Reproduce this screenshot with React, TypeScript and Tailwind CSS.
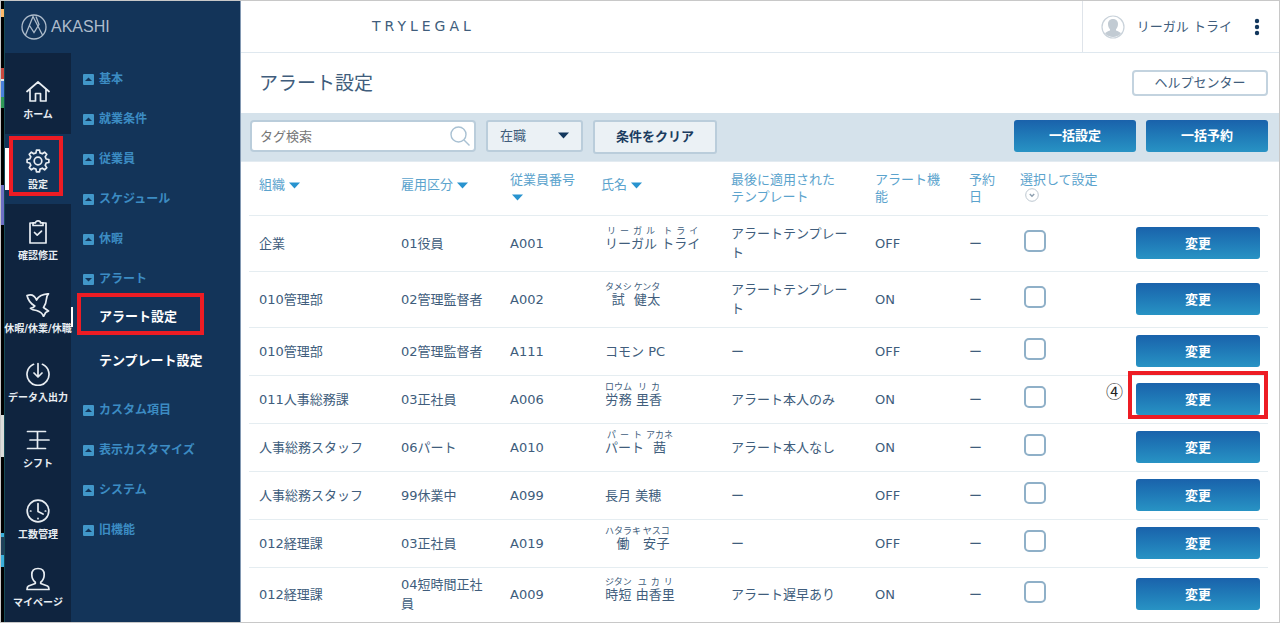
import type { ReactNode } from "react";
import { clsx } from "clsx";

type NamePart = { base: string; kana?: string };

type Employee = {
  org: string;
  kind: string;
  code: string;
  name: NamePart[];
  template: string;
  alert: "ON" | "OFF";
  marked?: boolean;
};

const EMPLOYEES: Employee[] = [
  {
    org: "企業",
    kind: "01役員",
    code: "A001",
    name: [
      { base: "リーガル", kana: "リーガル" },
      { base: "トライ", kana: "トライ" },
    ],
    template: "アラートテンプレート",
    alert: "OFF",
  },
  {
    org: "010管理部",
    kind: "02管理監督者",
    code: "A002",
    name: [
      { base: "試", kana: "タメシ" },
      { base: "健太", kana: "ケンタ" },
    ],
    template: "アラートテンプレート",
    alert: "ON",
  },
  { org: "010管理部", kind: "02管理監督者", code: "A111", name: [{ base: "コモン PC" }], template: "ー", alert: "OFF" },
  {
    org: "011人事総務課",
    kind: "03正社員",
    code: "A006",
    name: [
      { base: "労務", kana: "ロウム" },
      { base: "里香", kana: "リカ" },
    ],
    template: "アラート本人のみ",
    alert: "ON",
    marked: true,
  },
  {
    org: "人事総務スタッフ",
    kind: "06パート",
    code: "A010",
    name: [
      { base: "パート", kana: "パート" },
      { base: "茜", kana: "アカネ" },
    ],
    template: "アラート本人なし",
    alert: "ON",
  },
  { org: "人事総務スタッフ", kind: "99休業中", code: "A099", name: [{ base: "長月 美穂" }], template: "ー", alert: "OFF" },
  {
    org: "012経理課",
    kind: "03正社員",
    code: "A019",
    name: [
      { base: "働", kana: "ハタラキ" },
      { base: "安子", kana: "ヤスコ" },
    ],
    template: "ー",
    alert: "OFF",
  },
  {
    org: "012経理課",
    kind: "04短時間正社員",
    code: "A009",
    name: [
      { base: "時短", kana: "ジタン" },
      { base: "由香里", kana: "ユカリ" },
    ],
    template: "アラート遅早あり",
    alert: "ON",
  },
];

// eight-toothed outline around (12, 12)
const GEAR = Array.from({ length: 8 }, (_, i) =>
  [
    [-14, 8.4],
    [-8, 11],
    [8, 11],
    [14, 8.4],
  ]
    .map(([deg, r]) => {
      const a = ((i * 45 + deg) * Math.PI) / 180;
      return `${(12 + r * Math.cos(a)).toFixed(2)},${(12 + r * Math.sin(a)).toFixed(2)}`;
    })
    .join(" ")
).join(" ");

function Icon({ children }: { children: ReactNode }) {
  return (
    <svg
      viewBox="0 0 24 24"
      className="size-6 shrink-0"
      fill="none"
      stroke="currentColor"
      strokeWidth="1.7"
      strokeLinecap="round"
      strokeLinejoin="round"
      aria-hidden="true"
    >
      {children}
    </svg>
  );
}

const RAIL = [
  {
    label: "ホーム",
    height: "h-[81px]",
    icon: <path d="M1 12.500 12 3l11 9.500M4 10.500V22h5.500v-7.500h5V22H20V10.500" />,
  },
  {
    label: "設定",
    height: "h-[70px]",
    active: true,
    icon: (
      <>
        <polygon points={GEAR} />
        <circle cx="12" cy="12" r="3.8" />
      </>
    ),
  },
  {
    label: "確認修正",
    height: "h-[71px]",
    icon: (
      <>
        <path d="M7 3H4v20h16V3h-3" />
        <path d="M7 5.5V2.800h2.500c0-2.500 5-2.500 5 0H17v2.700z" />
        <path d="m8.500 12.500 2.700 2.700 4.300-4" />
      </>
    ),
  },
  {
    label: "休暇/休業/休職",
    height: "h-[73px]",
    icon: (
      <path d="M1 2.500C5 1 8.500 2 10.500 7c2-4 6-6 12-6.200-1.500 1.500-1.800 3-2 5-.3 4-1.500 6.700-3 8.700l5 3.500-2.800 1.500-2.200 4c-1-3-3.500-5-7-6-2.800-.5-4.500-1-6-2.200 2-.3 3.500-1 4.300-2.300C4.500 10.500 2 7 1 2.500z" />
    ),
  },
  {
    label: "データ入出力",
    height: "h-[69px]",
    icon: <path d="M7.500 2.300a11 11 0 1 0 9 0M12 1.500v13M8 11l4 4 4-4" />,
  },
  {
    label: "シフト",
    height: "h-[66px]",
    icon: <path d="M1.500 3.500h18M4 12h19M1.500 20.500h18M11.500 3.500v17" />,
  },
  {
    label: "工数管理",
    height: "h-[71px]",
    icon: (
      <>
        <circle cx="12" cy="12" r="10.800" />
        <path d="M12 4.500V12.500l5 2.500M4.500 12h.4M19.300 12h.4M12 19.300v.4" />
      </>
    ),
  },
  {
    label: "マイページ",
    height: "h-[68px]",
    icon: (
      <path d="M9.300 15.200C7 13.500 5.800 10.500 5.800 7.500 5.800 3.800 8.300 1.500 12 1.500s6.200 2.300 6.200 6c0 3-1.200 6-3.500 7.700v1.300l6.800 2.500c1 .5 1.500 1.500 1.500 3.500H1c0-2 .5-3 1.500-3.500l6.800-2.500z" />
    ),
  },
];

const MENU = [
  { label: "基本" },
  { label: "就業条件" },
  { label: "従業員" },
  { label: "スケジュール" },
  { label: "休暇" },
  { label: "アラート", open: true },
  { label: "カスタム項目" },
  { label: "表示カスタマイズ" },
  { label: "システム" },
  { label: "旧機能" },
];

// strip of the desktop that shows beside the window
const STRIP = [
  "h-2 bg-black",
  "h-2 bg-orange-300",
  "h-[51px] bg-black",
  "h-[11px] bg-[#c8493f]",
  "h-0.5 bg-slate-200",
  "h-4 bg-[#4a80dc]",
  "h-[11px] bg-[#2f9a57]",
  "h-[77px] bg-black",
  "h-10 bg-[#6e6fc4]",
  "h-[190px] bg-black",
  "h-[42px] bg-[#dcdcda]",
  "h-[76px] bg-black",
  "h-1 bg-[#3aaedb]",
  "h-[18px] bg-[#20405a]",
  "h-3 bg-[#3aaedb]",
  "flex-1 bg-black",
];

const primaryButton =
  "h-8 rounded-[3px] bg-linear-to-b from-[#1a62ab] to-[#2893c4] text-[13px] font-bold text-white cursor-pointer";

function Triangle({ className }: { className?: string }) {
  return (
    <svg viewBox="0 0 11 7" className={clsx("inline-block h-[7px] w-[11px]", className)} fill="currentColor" aria-hidden="true">
      <path d="M0 .5h11L5.500 6.500z" />
    </svg>
  );
}

function Logo() {
  return (
    <div className="flex h-[52px] items-center gap-1 pl-4 text-[#aebccb]">
      <svg viewBox="0 0 26 26" className="size-[26px]" fill="none" stroke="currentColor" strokeWidth="1.300" aria-hidden="true">
        <circle cx="13" cy="13" r="12" />
        <path d="M4.500 21 12 2.500 21.500 21M8.500 11.500l4.500 7 5-8-3-8" />
      </svg>
      <span className="font-['Liberation_Sans',sans-serif] text-[16px]">AKASHI</span>
    </div>
  );
}

function Rail() {
  return (
    <nav className="w-[66px] shrink-0 bg-[#0f243f]" aria-label="メイン">
      {RAIL.map((item) => (
        <a
          key={item.label}
          href="#"
          className={clsx(
            "relative flex flex-col items-center justify-end gap-1 pb-[11px] text-[#e8edf2]",
            item.height,
            item.active && "bg-[#133459]"
          )}
        >
          <Icon>{item.icon}</Icon>
          <span className="text-[10px] leading-4 font-bold whitespace-nowrap">{item.label}</span>
          {item.active && (
            <>
              <span className="absolute top-3.5 left-0 h-[42px] w-1 bg-white" />
              <span className="absolute inset-x-1 top-0.5 bottom-2 mr-1 border-4 border-[#ed1c24]" />
            </>
          )}
        </a>
      ))}
    </nav>
  );
}

function SideMenu() {
  return (
    <nav className="relative flex-1 pt-1.5" aria-label="設定メニュー">
      <span className="absolute top-[254px] left-0 h-5 w-0.5 bg-white" />
      <ul>
        {MENU.map((item) => (
          <li key={item.label}>
            <a href="#" className="flex h-10 items-center gap-[5px] pl-3 text-[12px] font-bold text-[#3c8cc3]">
              <svg viewBox="0 0 11 11" className="size-[11px]" aria-hidden="true">
                <rect width="11" height="11" rx="1" fill="#4197c9" />
                <path d={item.open ? "M2 4h7L5.500 7.500z" : "M2 7h7L5.500 3.500z"} fill="#133459" />
              </svg>
              {item.label}
            </a>
            {item.open && (
              <ul className="mb-[11px] flex flex-col gap-2 text-[13px] font-bold text-white">
                <li className="relative">
                  <a href="#" className="flex h-9 items-center pl-7">
                    アラート設定
                  </a>
                  <span className="absolute -top-1.5 left-1.5 h-[42px] w-[127px] border-4 border-[#ed1c24]" />
                </li>
                <li>
                  <a href="#" className="flex h-9 items-center pl-7">
                    テンプレート設定
                  </a>
                </li>
              </ul>
            )}
          </li>
        ))}
      </ul>
    </nav>
  );
}

function TopBar() {
  return (
    <header className="flex h-[52px] items-stretch border-b border-[#dfe8ef]">
      <div className="flex flex-1 items-center pl-[131px] text-[14px] tracking-[4px]">TRYLEGAL</div>
      <div className="flex items-center border-l border-[#dfe4ea] pr-[19px] pl-[18px]">
        <svg viewBox="0 0 24 24" className="size-6" aria-hidden="true">
          <circle cx="12" cy="12" r="11" fill="#fff" stroke="#c9d2da" strokeWidth="1.200" />
          <path
            d="M12 4c-3.300 0-5 2.200-5 5 0 2.200.8 4 2 5.200v1.300c-2 .8-4 1.500-5 2.800 2 2.500 5 3.800 8 3.800s6-1.300 8-3.800c-1-1.300-3-2-5-2.800v-1.300c1.200-1.200 2-3 2-5.200 0-2.800-1.700-5-5-5z"
            fill="#c2cbd3"
          />
        </svg>
        <span className="ml-3 text-[13px]">リーガル トライ</span>
        <button type="button" aria-label="メニュー" className="ml-[22px] cursor-pointer">
          <svg viewBox="0 0 6 18" className="h-[18px] w-1.5" fill="#12375d" aria-hidden="true">
            <circle cx="3" cy="3" r="2.200" />
            <circle cx="3" cy="9" r="2.200" />
            <circle cx="3" cy="15" r="2.200" />
          </svg>
        </button>
      </div>
    </header>
  );
}

function FilterBar() {
  return (
    <div className="flex items-start gap-2.5 border-b border-[#e3ebf1] bg-[#d5e2eb] py-[7px] pr-[11px] pl-[9px]">
      <div className="relative w-[226px]">
        <input
          type="text"
          aria-label="タグ検索"
          placeholder="タグ検索"
          className="h-8 w-full rounded-[4px] border-2 border-[#bacddb] bg-white pr-8 pl-2 text-[13px] placeholder:text-[#777]"
        />
        <svg viewBox="0 0 20 20" className="absolute top-1.5 right-1.5 size-5" fill="none" stroke="#a9c1d3" strokeWidth="1.400" aria-hidden="true">
          <circle cx="8.500" cy="8.500" r="7.500" />
          <path d="m14 14 5.500 5.500" />
        </svg>
      </div>
      <div className="relative w-[97px]">
        <select
          aria-label="在職状況"
          className="h-8 w-full appearance-none rounded-[3px] border-2 border-[#bacddb] bg-[#ebf1f5] pl-3 text-[13px]"
        >
          <option>在職</option>
        </select>
        <Triangle className="pointer-events-none absolute top-3 right-3.5 text-[#12375d]" />
      </div>
      <button
        type="button"
        className="h-[34px] w-[124px] cursor-pointer rounded-[3px] border-2 border-[#bacddb] bg-[#ebf1f5] text-[13px] font-bold text-[#1b3c60]"
      >
        条件をクリア
      </button>
      <div className="ml-auto flex gap-2.5">
        <button type="button" className={clsx(primaryButton, "w-[122px]")}>
          一括設定
        </button>
        <button type="button" className={clsx(primaryButton, "w-[122px]")}>
          一括予約
        </button>
      </div>
    </div>
  );
}

function Name({ parts }: { parts: NamePart[] }) {
  return (
    <div className={clsx("pl-1", parts.some((part) => part.kana) && "pb-2")}>
      {parts.map((part, i) => (
        <span key={part.base}>
          {i > 0 && " "}
          {part.kana ? (
            <ruby>
              {part.base}
              <rt className="text-[9px] leading-[11px]">{part.kana}</rt>
            </ruby>
          ) : (
            part.base
          )}
        </span>
      ))}
    </div>
  );
}

function EmployeeTable() {
  return (
    <table className="w-full table-fixed border-collapse text-left text-[13px]">
      <colgroup>
        <col />
        <col className="w-[109px]" />
        <col className="w-[91px]" />
        <col className="w-[130px]" />
        <col className="w-[144px]" />
        <col className="w-[94px]" />
        <col className="w-[51px]" />
        <col className="w-[116px]" />
        <col className="w-[142px]" />
      </colgroup>
      <thead>
        <tr className="h-[53px] border-b border-[#e5edf1] align-top leading-[17px] text-[#5ba3cd] [&>th]:px-2.5 [&>th]:font-normal">
          <th className="pt-3.5">
            組織
            <Triangle className="ml-1 text-[#2893cf]" />
          </th>
          <th className="pt-3.5">
            雇用区分
            <Triangle className="ml-1 text-[#2893cf]" />
          </th>
          <th className="pt-[9px]">
            従業員番号
            <Triangle className="ml-0.5 text-[#2893cf]" />
          </th>
          <th className="pt-3.5">
            氏名
            <Triangle className="ml-1 text-[#2893cf]" />
          </th>
          <th className="pt-[9px]">
            最後に適用された
            <br />
            テンプレート
          </th>
          <th className="pt-[9px]">アラート機能</th>
          <th className="pt-[9px]">予約日</th>
          <th className="pt-[9px]">
            選択して設定
            <svg viewBox="0 0 14 14" className="ml-[5px] block size-3.5" fill="none" stroke="#bcc7d0" aria-hidden="true">
              <circle cx="7" cy="7" r="6.300" />
              <path d="m4.800 6 2.200 2.200L9.200 6" stroke="#8ea0b0" strokeWidth="1.500" />
            </svg>
          </th>
          <th aria-label="操作" />
        </tr>
      </thead>
      <tbody>
        {EMPLOYEES.map((e) => (
          <tr
            key={e.code}
            className={clsx(
              "border-b border-[#e5edf1] leading-[19px] last:border-b-0 [&>td]:px-2.5",
              e.template.length > 9 ? "h-14" : e.kind.length > 7 ? "h-[54px]" : "h-12"
            )}
          >
            <td>{e.org}</td>
            <td>{e.kind}</td>
            <td>{e.code}</td>
            <td className="whitespace-nowrap">
              <Name parts={e.name} />
            </td>
            <td>{e.template}</td>
            <td>{e.alert}</td>
            <td>ー</td>
            <td className="pb-[5px]">
              <input
                type="checkbox"
                aria-label={`${e.code} を選択`}
                className="ml-1 block size-[22px] appearance-none rounded-[5px] border-2 border-[#8fb0c8] bg-white checked:bg-[#2893c4]"
              />
            </td>
            <td>
              <div className="relative -mr-0.5">
                <button type="button" className={clsx(primaryButton, "block w-full")}>
                  変更
                </button>
                {e.marked && (
                  <>
                    <span className="pointer-events-none absolute -inset-x-2 -top-3 -bottom-1 border-4 border-[#ed1c24]" />
                    <span className="absolute -top-0.5 -left-[30px] font-['Noto_Sans_CJK_JP',sans-serif] text-[17px] text-[#222]">
                      ④
                    </span>
                  </>
                )}
              </div>
            </td>
          </tr>
        ))}
      </tbody>
    </table>
  );
}

export default function App() {
  return (
    <div className="flex min-h-screen border border-[#c8c8c8] bg-white font-['DejaVu_Sans','Noto_Sans_CJK_JP',sans-serif] text-[#405d7c]">
      <div className="flex w-1 shrink-0 flex-col border-r border-[#164a55]" aria-hidden="true">
        {STRIP.map((block, i) => (
          <div key={i} className={block} />
        ))}
      </div>

      <aside className="flex w-[235px] shrink-0 flex-col bg-[#133459]">
        <Logo />
        <div className="flex flex-1">
          <Rail />
          <SideMenu />
        </div>
      </aside>

      <main className="min-w-0 flex-1 border-l border-[#8298b2]">
        <TopBar />
        <div className="flex h-[60px] items-center justify-between pr-[11px] pl-[18px]">
          <h1 className="text-[19px]">アラート設定</h1>
          <a
            href="#"
            className="flex h-[26px] w-[136px] items-center justify-center rounded-[4px] border-2 border-[#c3d3df] text-[13px]"
          >
            ヘルプセンター
          </a>
        </div>
        <FilterBar />
        <div className="pr-[11px] pl-2">
          <EmployeeTable />
        </div>
      </main>
    </div>
  );
}
